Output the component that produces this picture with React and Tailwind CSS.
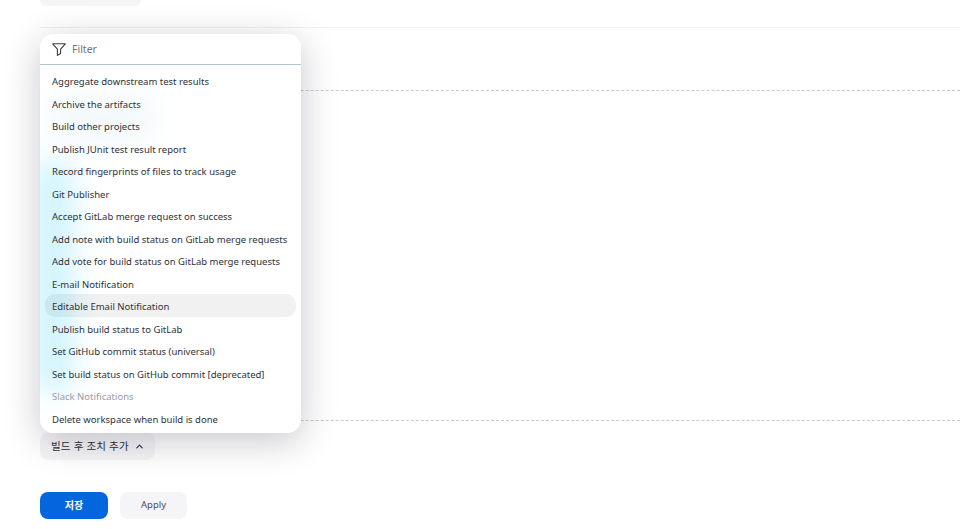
import React from "react";
import { ChevronUp } from "lucide-react";

const items = [
  "Aggregate downstream test results",
  "Archive the artifacts",
  "Build other projects",
  "Publish JUnit test result report",
  "Record fingerprints of files to track usage",
  "Git Publisher",
  "Accept GitLab merge request on success",
  "Add note with build status on GitLab merge requests",
  "Add vote for build status on GitLab merge requests",
  "E-mail Notification",
  "Editable Email Notification",
  "Publish build status to GitLab",
  "Set GitHub commit status (universal)",
  "Set build status on GitHub commit [deprecated]",
  "Slack Notifications",
  "Delete workspace when build is done",
];

const FONT = "font-['Noto_Sans','Noto_Sans_CJK_KR',sans-serif]";

const FilterIcon = () => (
  <svg width="14" height="13" viewBox="0 0 14 13" fill="none" stroke="#3a3d45" strokeWidth="1.1" strokeLinejoin="round" className="shrink-0">
    <path d="M0.7 0.8h12.6L8.6 6.2v4.3l-3.2 1.9V6.2z" />
  </svg>
);

const Menu = () => (
  <div className="absolute left-10 top-[34px] z-10 w-[261px] h-[399px] rounded-[14px] bg-white overflow-hidden">
    {/* resplandor azul detras del menu */}
    <div className="absolute left-[-8px] top-[125px] w-[42px] h-[235px] rounded-full bg-[#d0f4fd] blur-[14px]" />
    <div className="absolute left-[8px] top-[60px] w-[110px] h-[50px] rounded-full bg-[#f3f9fb] blur-[14px]" />
    <div className="relative">
      <div className="flex items-center gap-[6px] h-[31px] pl-3 pt-px border-b border-[#b4c5cf]">
        <FilterIcon />
        <span className="text-[10.5px] text-[#71747c]">Filter</span>
      </div>
      <ul className="pt-[4px] px-[5px]">
        {items.map((item) => (
          <li
            key={item}
            className={
              "h-[22.5px] leading-[25px] pl-[7px] rounded-[10px] whitespace-nowrap text-[9.5px] " +
              (item === "Slack Notifications"
                ? "text-[#9a9aa8]"
                : item === "Editable Email Notification"
                ? "text-[#2f3137] bg-[#14141f]/[0.06]"
                : "text-[#2f3137]")
            }
          >
            {item}
          </li>
        ))}
      </ul>
    </div>
  </div>
);

export default function App() {
  return (
    <div className={"relative h-[529px] overflow-hidden bg-white pl-10 " + FONT}>
      <div className="h-[6px] w-[101px] rounded-b-[8px] bg-[#f5f5f7]" />
      <div className="mt-[21px] border-t border-[#f0f0f2]" />
      <div className="mt-[62px] h-[331px] border-y border-dashed border-[#c3ccd3]" />
      <button className="mt-3 flex items-center gap-[5px] h-[27px] w-[115px] pl-[11px] rounded-[8px] bg-[#f5f5f7] text-[10.5px] tracking-[0.2px] text-[#2b2d33]">
        빌드 후 조치 추가
        <ChevronUp size={11} strokeWidth={2.25} />
      </button>
      <div className="mt-8 flex gap-3">
        <button className="h-[27px] w-[68px] rounded-[8px] bg-[#0366dc] text-[10px] font-bold text-white">저장</button>
        <button className="h-[27px] w-[67px] rounded-[8px] bg-[#f5f5f7] text-[9.5px] text-[#4a4c54]">Apply</button>
      </div>
      <div className="absolute left-10 top-[34px] w-[261px] h-[399px] rounded-[14px] shadow-[0_8px_36px_rgba(20,20,40,0.24)]" />
      <Menu />
    </div>
  );
}
